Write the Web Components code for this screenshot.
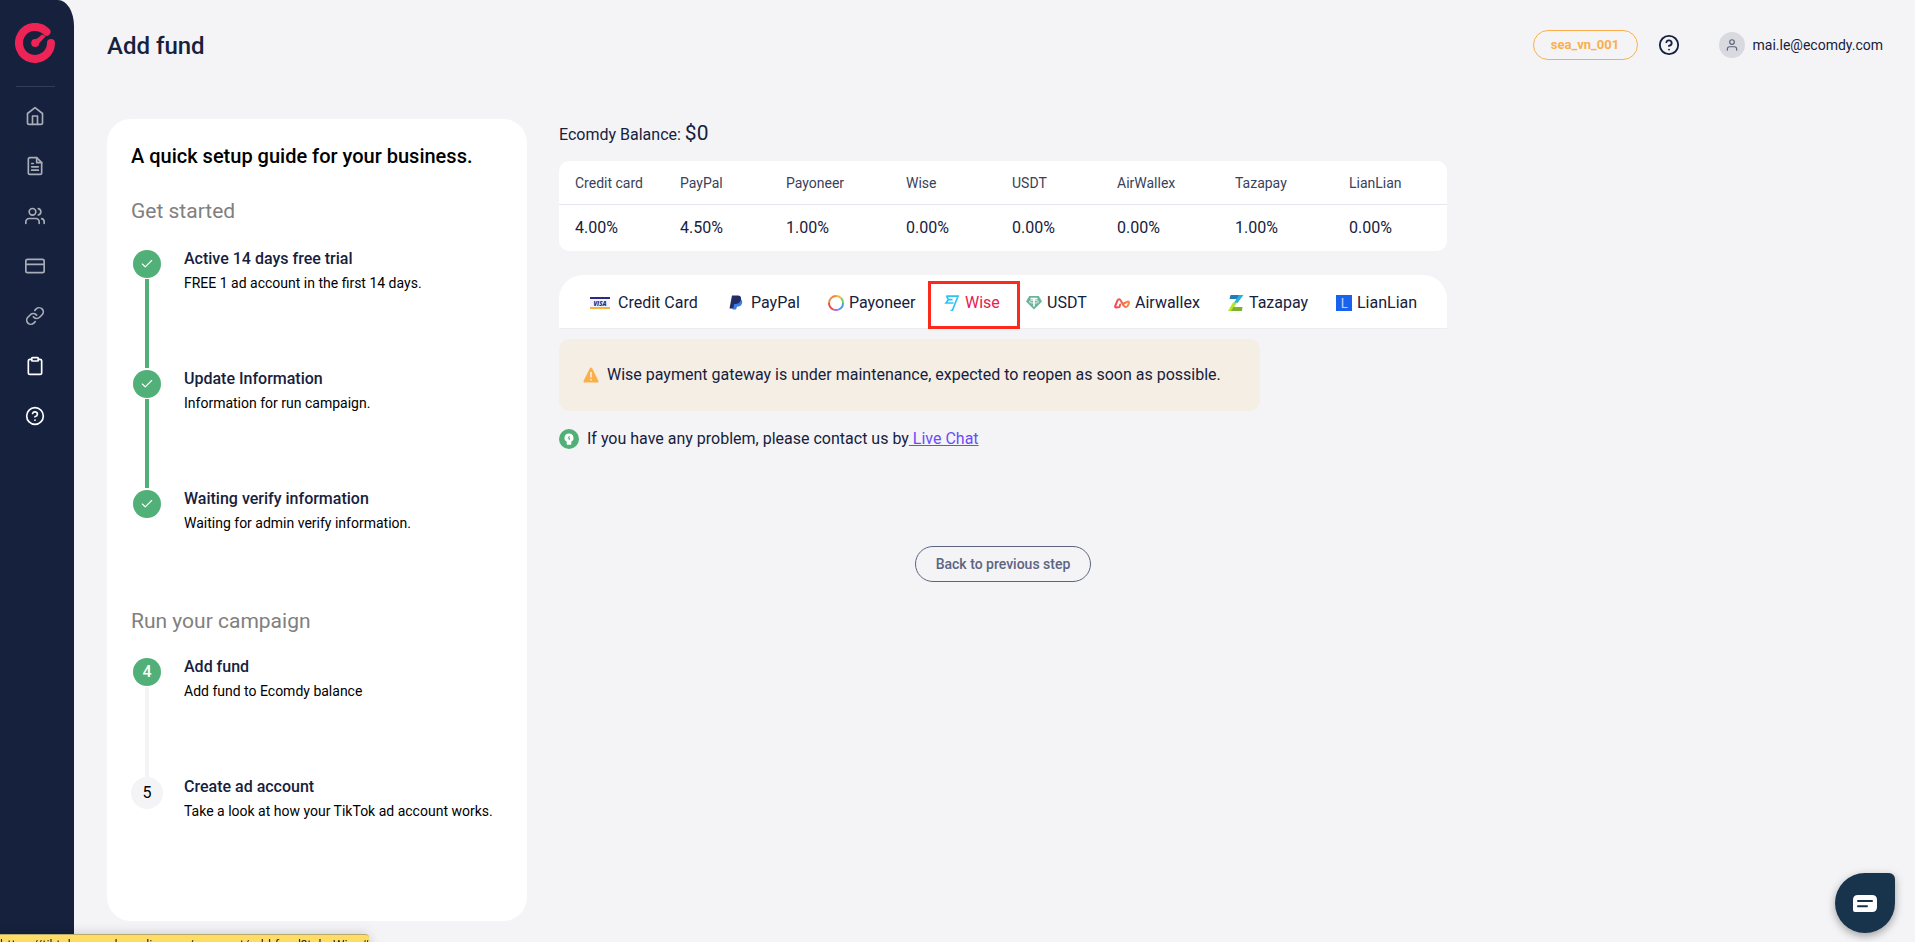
<!DOCTYPE html>
<html lang="en">
<head>
<meta charset="utf-8">
<meta name="viewport" content="width=device-width, initial-scale=1">
<title>Add fund</title>
<style>
  :root {
    --navy: #16213d;
    --page: #f4f4f7;
    --green: #50b077;
    --muted: #808080;
    --line: #e6e7ee;
    --amber: #fbaf4b;
  }
  body {
    margin: 0;
    background: var(--page);
    color: var(--navy);
    font: 400 16px/24px Roboto, "Liberation Sans", sans-serif;
  }
</style>
</head>
<body>
<fund-app></fund-app>

<script>
class Base extends HTMLElement {
  connectedCallback() {
    if (this.shadowRoot) return;
    const t = document.createElement('template');
    t.innerHTML = '<style>*{box-sizing:border-box}h1,h2,h3,h4,p{margin:0}</style>' + this.view();
    this.attachShadow({ mode: 'open' }).append(t.content.cloneNode(true));
  }
}

const line = (d, w = 2) =>
  `<svg viewBox="0 0 24 24" fill="none" stroke="currentColor" stroke-width="${w}" stroke-linecap="round" stroke-linejoin="round" aria-hidden="true">${d}</svg>`;

const ICONS = {
  home: line('<path d="M3 9l9-7 9 7v11a2 2 0 0 1-2 2H5a2 2 0 0 1-2-2z"/><path d="M9 22V12h6v10"/>'),
  file: line('<path d="M14 2H6a2 2 0 0 0-2 2v16a2 2 0 0 0 2 2h12a2 2 0 0 0 2-2V8z"/><path d="M14 2v6h6M16 13H8M16 17H8M10 9H8"/>'),
  users: line('<path d="M17 21v-2a4 4 0 0 0-4-4H5a4 4 0 0 0-4 4v2"/><circle cx="9" cy="7" r="4"/><path d="M23 21v-2a4 4 0 0 0-3-3.87M16 3.13a4 4 0 0 1 0 7.75"/>'),
  card: line('<rect x="1" y="4" width="22" height="16" rx="2"/><path d="M1 10h22"/>'),
  link: line('<path d="M10 13a5 5 0 0 0 7.54.54l3-3a5 5 0 0 0-7.07-7.07l-1.72 1.71"/><path d="M14 11a5 5 0 0 0-7.54-.54l-3 3a5 5 0 0 0 7.07 7.07l1.71-1.71"/>'),
  clipboard: line('<path d="M16 4h2a2 2 0 0 1 2 2v14a2 2 0 0 1-2 2H6a2 2 0 0 1-2-2V6a2 2 0 0 1 2-2h2"/><rect x="8" y="2" width="8" height="4" rx="1"/>'),
  help: line('<circle cx="12" cy="12" r="10"/><path d="M9.09 9a3 3 0 0 1 5.83 1c0 2-3 3-3 3M12 17h.01"/>'),
  user: line('<path d="M20 21v-2a4 4 0 0 0-4-4H8a4 4 0 0 0-4 4v2"/><circle cx="12" cy="7" r="4"/>'),
  check: line('<path d="M20 6L9 17l-5-5"/>'),
  logo: `<svg viewBox="0 0 40 40" aria-hidden="true"><path d="M36 20A16 16 0 1 1 31.500 8.800" fill="none" stroke="#ee2456" stroke-width="8" stroke-linecap="round"/><path d="M26.500 11.500L31 13L22.500 22L18 17.800Q24 15 26.500 11.500z" fill="#ee2456"/><circle cx="20.200" cy="20" r="4" fill="#ee2456"/></svg>`,
  visa: `<svg viewBox="0 0 20 14" aria-hidden="true"><path d="M0 1h20v12H0z" fill="#f3f4fb"/><path d="M0 1h20v2H0z" fill="#2a2a86"/><path d="M0 11h20v2H0z" fill="#f7b23b"/><text x="10" y="9.500" text-anchor="middle" font-family="Open Sans, sans-serif" font-size="6" font-weight="800" font-style="italic" fill="#2a2a86">VISA</text></svg>`,
  paypal: `<svg viewBox="0 0 16 16" aria-hidden="true"><path d="M6 4h6.500c2 1 2 3 1.300 5-.8 2-2.500 2.700-4.800 2.700L8 14.500H4.500z" fill="#3b7de8"/><path d="M4 .5h6.300c2.600.3 3.300 2.200 2.600 4.600C12.100 8 10 9 7.500 9H6.200l-1 4.500H1.500z" fill="#222d65"/></svg>`,
  payoneer: `<svg viewBox="0 0 16 16" fill="none" stroke-width="1.900" aria-hidden="true"><path d="M8 1a7 7 0 0 0-7 7" stroke="#f2843b"/><path d="M1 8a7 7 0 0 0 4 6.300" stroke="#ee4a3f"/><path d="M5 14.300a7 7 0 0 0 5.500.3" stroke="#b06ae0"/><path d="M10.500 14.600A7 7 0 0 0 15 8" stroke="#4b9be8"/><path d="M15 8a7 7 0 0 0-2-5" stroke="#6ccf6a"/><path d="M13 3a7 7 0 0 0-5-2" stroke="#f3b83c"/></svg>`,
  wise: `<svg viewBox="0 0 16 16" fill="none" stroke="#2cc3f5" stroke-width="1.700" aria-hidden="true"><path d="M2.300 1.200H14L8.300 15.500H6.500M2.500 1.200l2 3.300L2 8h7.500M5 4.600h3.500"/></svg>`,
  usdt: `<svg viewBox="0 0 16 16" aria-hidden="true"><path d="M3.200 1h9.600L16 6.500 8 14.500 0 6.500z" fill="#6cb39b"/><path d="M4.500 3.600h7M8 3.600v8" fill="none" stroke="#fff" stroke-width="1.600"/><ellipse cx="8" cy="6.800" rx="4.700" ry="1.300" fill="none" stroke="#fff" stroke-width=".8"/></svg>`,
  airwallex: `<svg viewBox="0 0 16 16" aria-hidden="true"><defs><linearGradient id="g"><stop stop-color="#f0435c"/><stop offset="1" stop-color="#f98c3e"/></linearGradient></defs><path d="M6.200 9.500L5.500 12l-3.500.6c-1-.2-1-.9-.7-1.700l2.300-5.700c.7-1.300 2-1.300 2.800-.2l3.200 5.600c.9 1.600 2.800 1.700 3.900.5.700-1 1.300-2.200 1.500-3.500 0-1-.7-1.200-1.500-.9L9.800 8.500" fill="none" stroke="url(#g)" stroke-width="2" stroke-linecap="round" stroke-linejoin="round"/></svg>`,
  tazapay: `<svg viewBox="0 0 16 16" aria-hidden="true"><path d="M2.500 0H13l-3.500 4H1.500z" fill="#1f7fb5"/><path d="M11 0h4.500L9.500 8H5.800z" fill="#2ab0e0"/><path d="M5 7.500h4L4 16H0z" fill="#b3e52c"/><path d="M5.500 12h9L14 16H3z" fill="#7eb22b"/></svg>`,
  lianlian: `<svg viewBox="0 0 16 16" aria-hidden="true"><path d="M0 0h16v16H0z" fill="#1862ee"/><text x="8" y="13" text-anchor="middle" font-family="Lato, sans-serif" font-size="14" fill="#b9d0fb">L</text></svg>`,
  warn: `<svg viewBox="0 0 16 16" aria-hidden="true"><path d="M8 .5q.8 0 1.300 1L15.500 14q.4 1.500-1 1.500h-13q-1.400 0-1-1.500L6.700 1.500q.5-1 1.300-1z" fill="#fbaf4b"/><path d="M8 5v5.500M8 12v1.500" stroke="#fff" stroke-width="1.300"/></svg>`,
  bulb: `<svg viewBox="0 0 20 20" aria-hidden="true"><circle cx="10" cy="10" r="10" fill="#50b077"/><path d="M10 4.500a4.400 4.400 0 0 1 2.300 8.200V15q0 .8-.8.800h-3q-.8 0-.8-.8v-2.300A4.400 4.400 0 0 1 10 4.500z" fill="#fff"/><path d="M10.500 7L9.300 9.200h1.500L10 11" fill="none" stroke="#50b077" stroke-width="1"/></svg>`,
  chat: `<svg viewBox="0 0 24 18" aria-hidden="true"><path d="M5 0h14q5 0 5 5v7q0 5-5 5H2q-2 0-2-2V5q0-5 5-5z" fill="#fff"/><path d="M5 6h14M5 11.300h9" stroke="#17344c" stroke-width="2" stroke-linecap="round"/></svg>`
};

customElements.define('app-icon', class extends Base {
  view() {
    return `<style>:host{display:block;flex:none;width:var(--icon-size,20px)}svg{display:block;width:100%}</style>${ICONS[this.getAttribute('name')]}`;
  }
});

customElements.define('side-nav', class extends Base {
  view() {
    const items = [['home', 'Home'], ['file', 'Reports'], ['users', 'Accounts'], ['card', 'Payments'], ['link', 'Links'], ['clipboard', 'Orders', 1], ['help', 'Help', 1]];
    return `<style>
      :host{display:flex;flex-direction:column;align-items:center;background:var(--navy);border-top-right-radius:16px 26px;padding:23px 4px 0 0}
      .logo{--icon-size:40px}
      hr{width:39px;height:1px;border:0;margin:23px 0 4px;background:#343d57}
      nav{display:flex;flex-direction:column}
      a{display:flex;align-items:center;justify-content:center;width:50px;height:50px;color:#a9adb8}
      a.on{color:#fff}
    </style>
    <app-icon class="logo" name="logo"></app-icon><hr>
    <nav>${items.map(([n, l, on]) => `<a href="#${n}" aria-label="${l}"${on ? ' class="on"' : ''}><app-icon name="${n}"></app-icon></a>`).join('')}</nav>`;
  }
});

customElements.define('page-header', class extends Base {
  view() {
    return `<style>
      :host{display:flex;align-items:center;justify-content:space-between;height:90px}
      h1{padding-top:2px;font-size:24px;line-height:32px;font-weight:500}
      .tools{display:flex;align-items:center}
      .tag{height:30px;width:105px;border:1px solid var(--amber);border-radius:15px;background:none;color:var(--amber);font:700 13px/16px Roboto,sans-serif;padding:0}
      .help{--icon-size:22px;margin:0 39px 0 20px;color:var(--navy)}
      .user{display:flex;align-items:center;gap:8px;font-size:14px;line-height:20px;color:inherit;text-decoration:none}
      .avatar{display:grid;place-items:center;width:26px;height:26px;border-radius:50%;background:#d9dae0;color:#5c6478;--icon-size:14px}
    </style>
    <h1><slot></slot></h1>
    <div class="tools">
      <button class="tag" type="button">sea_vn_001</button>
      <a class="help" href="#help" aria-label="Help"><app-icon name="help"></app-icon></a>
      <a class="user" href="#profile"><span class="avatar"><app-icon name="user"></app-icon></span>mai.le@ecomdy.com</a>
    </div>`;
  }
});

customElements.define('setup-step', class extends Base {
  view() {
    const state = this.getAttribute('state');
    const mark = state === 'done' ? '<app-icon name="check"></app-icon>' : this.getAttribute('number');
    return `<style>
      :host{display:grid;grid-template-columns:32px 1fr;column-gap:21px;height:120px}
      .rail{display:flex;flex-direction:column;align-items:center}
      .dot{flex:none;display:grid;place-items:center;width:28px;height:28px;margin:1px 0;border-radius:50%;background:var(--green);color:#fff;font-weight:500;--icon-size:14px}
      .todo .dot{width:32px;height:32px;margin:0;background:var(--page);color:#000;font-weight:400}
      .rail::after{content:"";flex:1;width:4px;margin-bottom:1px;background:var(--green)}
      .rail.current::after{background:var(--page);margin-bottom:0}
      :host([last]) .rail::after{display:none}
      h4{font-size:16px;line-height:20px;font-weight:500}
      p{font-size:14px;line-height:20px;color:#000;margin-top:4px}
    </style>
    <div class="rail ${state}"><span class="dot">${mark}</span></div>
    <div><h4><slot name="title"></slot></h4><p><slot></slot></p></div>`;
  }
});

customElements.define('setup-guide', class extends Base {
  view() {
    return `<style>
      :host{display:block;background:#fff;border-radius:24px;padding:24px}
      h2{font-size:20px;line-height:26px;font-weight:500;color:#000}
      h3{font-size:21px;line-height:24px;font-weight:400;color:var(--muted);margin:30px 0 26px}
      h3.next{margin:0 0 24px}
    </style>
    <h2>A quick setup guide for your business.</h2>
    <h3>Get started</h3>
    <setup-step state="done"><span slot="title">Active 14 days free trial</span>FREE 1 ad account in the first 14 days.</setup-step>
    <setup-step state="done"><span slot="title">Update Information</span>Information for run campaign.</setup-step>
    <setup-step state="done" last><span slot="title">Waiting verify information</span>Waiting for admin verify information.</setup-step>
    <h3 class="next">Run your campaign</h3>
    <setup-step state="current" number="4"><span slot="title">Add fund</span>Add fund to Ecomdy balance</setup-step>
    <setup-step state="todo" number="5" last><span slot="title">Create ad account</span>Take a look at how your TikTok ad account works.</setup-step>`;
  }
});

customElements.define('fee-table', class extends Base {
  view() {
    const rows = [['Credit card', '4.00%', 105], ['PayPal', '4.50%', 106], ['Payoneer', '1.00%', 120], ['Wise', '0.00%', 106], ['USDT', '0.00%', 105], ['AirWallex', '0.00%', 118], ['Tazapay', '1.00%', 114], ['LianLian', '0.00%', 114]];
    return `<style>
      :host{display:block;background:#fff;border-radius:10px}
      table{width:100%;table-layout:fixed;border-collapse:separate;border-spacing:0}
      th,td{text-align:left;padding:0 0 0 16px}
      th{height:44px;font-size:14px;line-height:20px;font-weight:400;color:#39425a;border-bottom:1px solid var(--line)}
      td{height:46px}
    </style>
    <table>
      <colgroup>${rows.map(r => `<col width="${r[2]}">`).join('')}</colgroup>
      <thead><tr>${rows.map(r => `<th scope="col">${r[0]}</th>`).join('')}</tr></thead>
      <tbody><tr>${rows.map(r => `<td>${r[1]}</td>`).join('')}</tr></tbody>
    </table>`;
  }
});

customElements.define('pay-tab', class extends Base {
  view() {
    const wide = this.getAttribute('icon') === 'visa';
    return `<style>
      :host{display:block;position:relative}
      a{display:flex;align-items:center;gap:${wide ? 8 : 5}px;height:100%;padding:2px 0 0 13px;color:inherit;text-decoration:none;white-space:nowrap;--icon-size:${wide ? 20 : 16}px}
      :host([active]){color:#e8204f}
      :host([active])::after{content:"";position:absolute;inset:6px -7px -1px -3px;border:3px solid #fc2a1c;pointer-events:none}
      :host([icon=paypal]) a{gap:7px}
    </style>
    <a href="#${this.getAttribute('icon')}"><app-icon name="${this.getAttribute('icon')}"></app-icon><slot></slot></a>`;
  }
});

customElements.define('pay-tabs', class extends Base {
  view() {
    return `<style>
      :host{display:grid;grid-template-columns:138fr 100fr 116fr 82fr 88fr 114fr 108fr 108fr;height:54px;padding:0 16px 0 18px;background:#fff;border-bottom:1px solid #ebebf0;border-radius:24px 24px 0 0}
    </style><slot></slot>`;
  }
});

customElements.define('fund-panel', class extends Base {
  view() {
    return `<style>
      :host{display:block}
      .balance{height:42px;line-height:28px;white-space:pre}
      .balance strong{font-size:21px;font-weight:400}
      pay-tabs{margin-top:24px}
      .alert{display:flex;align-items:center;gap:8px;max-width:701px;min-height:72px;margin-top:10px;padding:0 24px;border-radius:10px;background:#f5eee5;--icon-size:16px}
      .hint{display:flex;align-items:center;gap:8px;margin-top:16px}
      .hint a{color:#6b4df5;white-space:pre}
      .back{display:block;width:176px;height:36px;margin:95px auto 0;border:1px solid #5c6580;border-radius:18px;background:none;color:#5c6580;font:500 14px/20px Roboto,sans-serif}
    </style>
    <p class="balance">Ecomdy Balance: <strong>$0</strong></p>
    <fee-table></fee-table>
    <pay-tabs>
      <pay-tab icon="visa">Credit Card</pay-tab>
      <pay-tab icon="paypal">PayPal</pay-tab>
      <pay-tab icon="payoneer">Payoneer</pay-tab>
      <pay-tab icon="wise" active>Wise</pay-tab>
      <pay-tab icon="usdt">USDT</pay-tab>
      <pay-tab icon="airwallex">Airwallex</pay-tab>
      <pay-tab icon="tazapay">Tazapay</pay-tab>
      <pay-tab icon="lianlian">LianLian</pay-tab>
    </pay-tabs>
    <div class="alert" role="alert"><app-icon name="warn"></app-icon><p>Wise payment gateway is under maintenance, expected to reopen as soon as possible.</p></div>
    <div class="hint"><app-icon name="bulb"></app-icon><p>If you have any problem, please contact us by<a href="#chat"> Live Chat</a></p></div>
    <button class="back" type="button">Back to previous step</button>`;
  }
});

customElements.define('chat-launcher', class extends Base {
  view() {
    return `<style>
      :host{position:fixed;right:20px;bottom:9px}
      button{display:grid;place-items:center;width:60px;height:60px;padding:2px 0 0;border:0;border-radius:30px 6px 30px 30px;background:#17344c;box-shadow:0 3px 8px rgba(0,0,0,.35);--icon-size:24px}
    </style><button type="button" aria-label="Open chat"><app-icon name="chat"></app-icon></button>`;
  }
});

customElements.define('link-status', class extends Base {
  view() {
    return `<style>
      :host{position:fixed;left:0;bottom:-12px;min-width:367px;height:20px;border-radius:0 4px 0 0;border-top:1px solid #b9a96a;background:#ffdc64;color:#2b2a20;font-size:13px;line-height:20px;white-space:nowrap;box-shadow:0 0 12px rgba(0,0,0,.18)}
    </style><slot></slot>`;
  }
});

customElements.define('fund-app', class extends Base {
  view() {
    return `<style>
      :host{display:grid;grid-template-columns:74px minmax(0,1fr);min-height:100vh}
      main{padding:0 32px 20px 33px}
      .columns{display:grid;grid-template-columns:420px minmax(0,888px);gap:32px;align-items:start;margin-top:29px}
    </style>
    <side-nav></side-nav>
    <main>
      <page-header>Add fund</page-header>
      <div class="columns"><setup-guide></setup-guide><fund-panel></fund-panel></div>
    </main>
    <chat-launcher></chat-launcher>
    <link-status>https://tiktok.ecomdymedia.com/payment/add-fund?tab=Wise#</link-status>`;
  }
});
</script>
</body>
</html>
